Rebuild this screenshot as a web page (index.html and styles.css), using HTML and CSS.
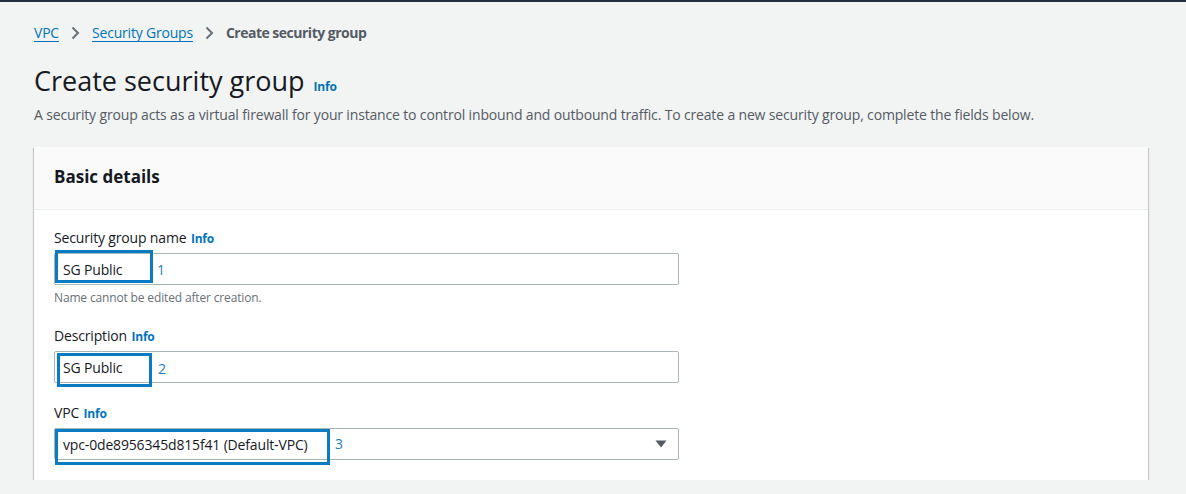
FILE: index.html
```html
<!DOCTYPE html>
<html lang="en">
<head>
<meta charset="utf-8">
<title>Create security group</title>
<link rel="stylesheet" href="styles.css">
</head>
<body>
<div class="topbar"></div>
<main class="page">
  <nav class="crumbs">
    <a class="crumb-link" href="#">VPC</a>
    <svg class="chev" width="16" height="16" viewBox="0 0 16 16"><path d="M5.5 2.5 11 8l-5.5 5.5" fill="none" stroke="#687078" stroke-width="2"/></svg>
    <a class="crumb-link" href="#">Security Groups</a>
    <svg class="chev" width="16" height="16" viewBox="0 0 16 16"><path d="M5.5 2.5 11 8l-5.5 5.5" fill="none" stroke="#687078" stroke-width="2"/></svg>
    <span class="crumb-current">Create security group</span>
  </nav>

  <h1 class="title">Create security group <a class="info info-title" href="#">Info</a></h1>
  <p class="desc">A security group acts as a virtual firewall for your instance to control inbound and outbound traffic. To create a new security group, complete the fields below.</p>

  <section class="card">
    <header class="card-head"><h2>Basic details</h2></header>
    <div class="card-body">
      <div class="field">
        <div class="label">Security group name <a class="info" href="#">Info</a></div>
        <div class="input">
          <span class="value">SG Public</span>
          <span class="mark mark-1"></span>
          <span class="num num-1">1</span>
        </div>
        <div class="hint">Name cannot be edited after creation.</div>
      </div>

      <div class="field">
        <div class="label">Description <a class="info" href="#">Info</a></div>
        <div class="input">
          <span class="value">SG Public</span>
          <span class="mark mark-2"></span>
          <span class="num num-2">2</span>
        </div>
      </div>

      <div class="field">
        <div class="label">VPC <a class="info" href="#">Info</a></div>
        <div class="input select">
          <span class="value">vpc-0de8956345d815f41 (Default-VPC)</span>
          <svg class="caret" width="12" height="8" viewBox="0 0 12 8"><path d="M0.5 0.5h11L6 7.5z" fill="#545b64"/></svg>
          <span class="mark mark-3"></span>
          <span class="num num-3">3</span>
        </div>
      </div>
    </div>
  </section>
</main>
</body>
</html>
```
FILE: styles.css
```css
* { box-sizing: border-box; }

html, body {
  margin: 0;
  background: #f2f3f3;
}

body {
  font-family: "Open Sans", "Noto Sans", Arial, sans-serif;
  font-size: 14px;
  letter-spacing: -0.16px;
  color: #16191f;
}

.topbar {
  height: 2px;
  background: #232f3e;
}

.page {
  padding: 21px 38px 0 34px;
}

/* Breadcrumbs */
.crumbs {
  display: flex;
  align-items: center;
  height: 20px;
  line-height: 20px;
}

.crumb-link {
  color: #0073bb;
  text-decoration: underline;
  text-underline-offset: 3px;
  text-decoration-thickness: 1px;
  letter-spacing: -0.2px;
}

.chev {
  margin: 0 9px 0 8px;
  flex: none;
}

.crumb-current {
  color: #545b64;
  font-weight: 700;
  letter-spacing: -0.5px;
}

/* Title */
.title {
  margin: 20px 0 0;
  font-size: 27px;
  line-height: 36px;
  font-weight: 400;
  letter-spacing: 0;
  color: #16191f;
  display: flex;
  align-items: baseline;
}

.info {
  color: #0073bb;
  font-weight: 700;
  font-size: 12px;
  letter-spacing: -0.2px;
  text-decoration: none;
  margin-left: 2px;
}

.info-title {
  margin-left: 9px;
  font-size: 12px;
}

.desc {
  margin: 0;
  line-height: 20px;
  color: #545b64;
}

/* Card */
.card {
  margin-top: 22px;
  background: #fff;
  box-shadow: 0 1px 1px 0 rgba(0, 28, 36, .3), 1px 1px 1px 0 rgba(0, 28, 36, .15), -1px 1px 1px 0 rgba(0, 28, 36, .15);
}

.card-head {
  background: #fafafa;
  border-bottom: 1px solid #eaeded;
  padding: 19px 20px 21px;
}

.card-head h2 {
  margin: 0;
  font-size: 17px;
  line-height: 22px;
  font-weight: 700;
  letter-spacing: 0;
  color: #16191f;
}

.card-body {
  padding: 18px 20px 0;
}

.field {
  padding-bottom: 20px;
}

.label {
  line-height: 20px;
  color: #16191f;
  margin-bottom: 4px;
}

.label .info {
  margin-left: 1px;
}

.input {
  position: relative;
  width: 625px;
  height: 32px;
  border: 1px solid #aab7b8;
  border-radius: 2px;
  background: #fff;
  display: flex;
  align-items: center;
  padding: 0 11px 0 8px;
}

.value {
  color: #16191f;
  white-space: nowrap;
}

.select {
  justify-content: space-between;
}

.caret {
  flex: none;
}

.hint {
  margin-top: 4px;
  font-size: 12px;
  line-height: 17px;
  color: #687078;
  letter-spacing: -0.15px;
}

/* Annotation overlays */
.mark {
  position: absolute;
  border: 3px solid #0a7bc1;
  pointer-events: none;
}

.mark-1 { left: 0; top: -4px; width: 98px; height: 33px; }
.mark-2 { left: 2px; top: 1px; width: 95px; height: 34px; }
.mark-3 { left: 0; top: 0; width: 275px; height: 36px; }

.num {
  position: absolute;
  transform: translateY(-50%);
  color: #1a7fc4;
  font-size: 14px;
  line-height: 20px;
}

.num-1 { left: 102px; top: 16px; }
.num-2 { left: 103px; top: 17px; }
.num-3 { left: 280px; top: 15px; }
```
